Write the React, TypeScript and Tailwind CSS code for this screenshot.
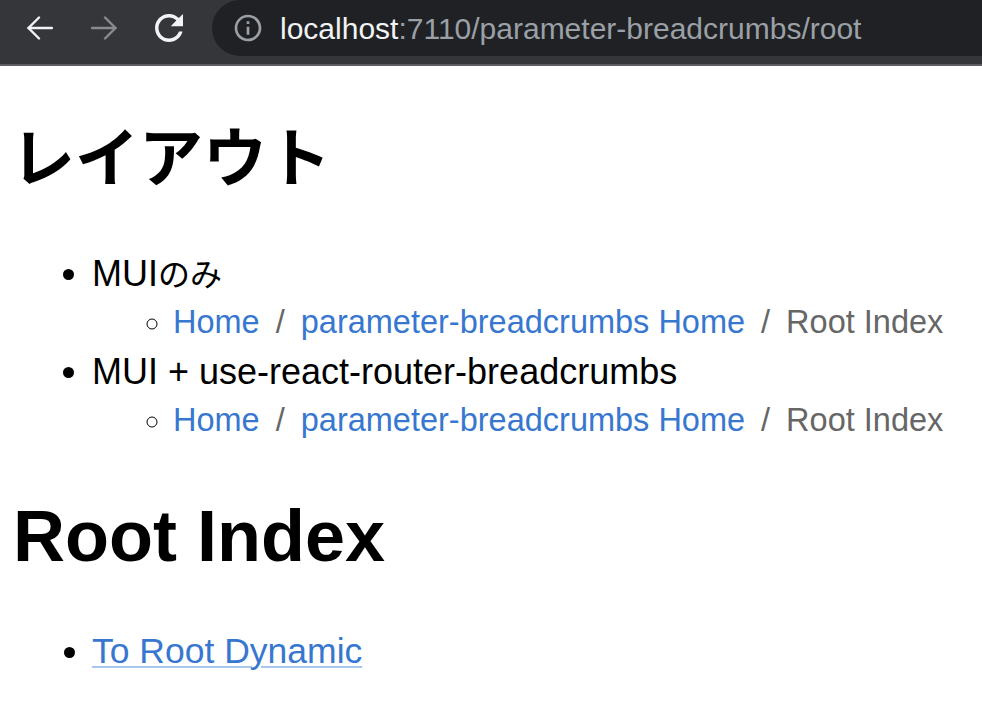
import { ReactNode } from 'react';

const sans = "font-['Liberation_Sans','Noto_Sans_CJK_JP',sans-serif]";
const cjk = "font-['Noto_Sans_CJK_JP',sans-serif]";

function ArrowIcon({ dir, color }: { dir: 'left' | 'right'; color: string }) {
  return (
    <svg width="26" height="24" viewBox="0 0 26 24" fill="none" stroke={color} strokeWidth="2.4" strokeLinecap="round" strokeLinejoin="round">
      {dir === 'left' ? (
        <>
          <path d="M25 12H1.5" />
          <path d="M12 1.5 1.5 12 12 22.5" />
        </>
      ) : (
        <>
          <path d="M1 12h23.5" />
          <path d="M14 1.5 24.5 12 14 22.5" />
        </>
      )}
    </svg>
  );
}

function ReloadIcon() {
  return (
    <svg width="42" height="42" viewBox="0 0 24 24" fill="#f1f3f4">
      <path d="M17.65 6.35C16.2 4.9 14.21 4 12 4c-4.42 0-7.99 3.58-7.99 8s3.57 8 7.99 8c3.73 0 6.84-2.55 7.73-6h-2.08c-.82 2.33-3.04 4-5.65 4-3.31 0-6-2.69-6-6s2.69-6 6-6c1.66 0 3.140.69 4.22 1.78L13 11h7V4l-2.35 2.35z" />
    </svg>
  );
}

function InfoIcon() {
  return (
    <svg width="32" height="32" viewBox="0 0 24 24" fill="#9aa0a6">
      <path d="M11 7h2v2h-2zm0 4h2v6h-2zm1-9C6.48 2 2 6.48 2 12s4.48 10 10 10 10-4.48 10-10S17.52 2 12 2zm0 18c-4.41 0-8-3.590-8-8s3.59-8 8-8 8 3.59 8 8-3.59 8-8 8z" />
    </svg>
  );
}

function Crumbs() {
  const sep = <span className="mx-4 text-[#666666]">/</span>;
  return (
    <span className={`${sans} text-[32.5px]`}>
      <a href="#" className="text-[#3777d0]">Home</a>
      {sep}
      <a href="#" className="text-[#3777d0]">parameter-breadcrumbs Home</a>
      {sep}
      <span className="text-[#666666]">Root Index</span>
    </span>
  );
}

function Item({ children, sub }: { children: ReactNode; sub?: ReactNode }) {
  return (
    <li className="list-disc">
      {children}
      {sub && (
        <ul className="pl-[81px]">
          <li className="list-[circle] text-[32px]">{sub}</li>
        </ul>
      )}
    </li>
  );
}

export default function App() {
  return (
    <div className="min-h-[704px] bg-white">
      {/* browser chrome */}
      <div className="h-16 bg-[#35363a] border-b-2 border-[#5c5d60] box-content">
        <div className="h-14 flex items-center">
          <div className="ml-[27px]">
            <ArrowIcon dir="left" color="#f1f3f4" />
          </div>
          <div className="ml-[38px]">
            <ArrowIcon dir="right" color="#8a8b8d" />
          </div>
          <div className="ml-[31px]">
            <ReloadIcon />
          </div>
          <div className="ml-[22px] flex-1 h-14 rounded-l-[28px] bg-[#202124] flex items-center">
            <div className="ml-[20px]">
              <InfoIcon />
            </div>
            <div className={`ml-[16px] ${sans} text-[30px] text-[#9aa0a6] whitespace-nowrap`}>
              <span className="text-[#f1f3f4]">localhost</span>:7110/parameter-breadcrumbs/root
            </div>
          </div>
        </div>
      </div>

      {/* page */}
      <div className={`px-[9px] text-black ${sans}`}>
        <h1 className={`${cjk} font-bold text-[64px] leading-[96px] pt-[39px] pl-[2px]`}>レイアウト</h1>
        <ul className="mt-[47px] pl-[83px] text-[36px] leading-[49px]">
          <Item sub={<Crumbs />}>
            MUI<span className={`${cjk} text-[32px]`}>のみ</span>
          </Item>
          <Item sub={<Crumbs />}>MUI + use-react-router-breadcrumbs</Item>
        </ul>
        <h1 className="font-bold text-[72px] leading-[96px] mt-[43px] pl-[4px]">Root Index</h1>
        <ul className="mt-[43px] pl-[83px] text-[35.5px] leading-[48px]">
          <li className="list-disc">
            <a href="#" className="text-[#3777d0] underline decoration-[#a9c6ee] decoration-2 underline-offset-[3px]">
              To Root Dynamic
            </a>
          </li>
        </ul>
      </div>
    </div>
  );
}
